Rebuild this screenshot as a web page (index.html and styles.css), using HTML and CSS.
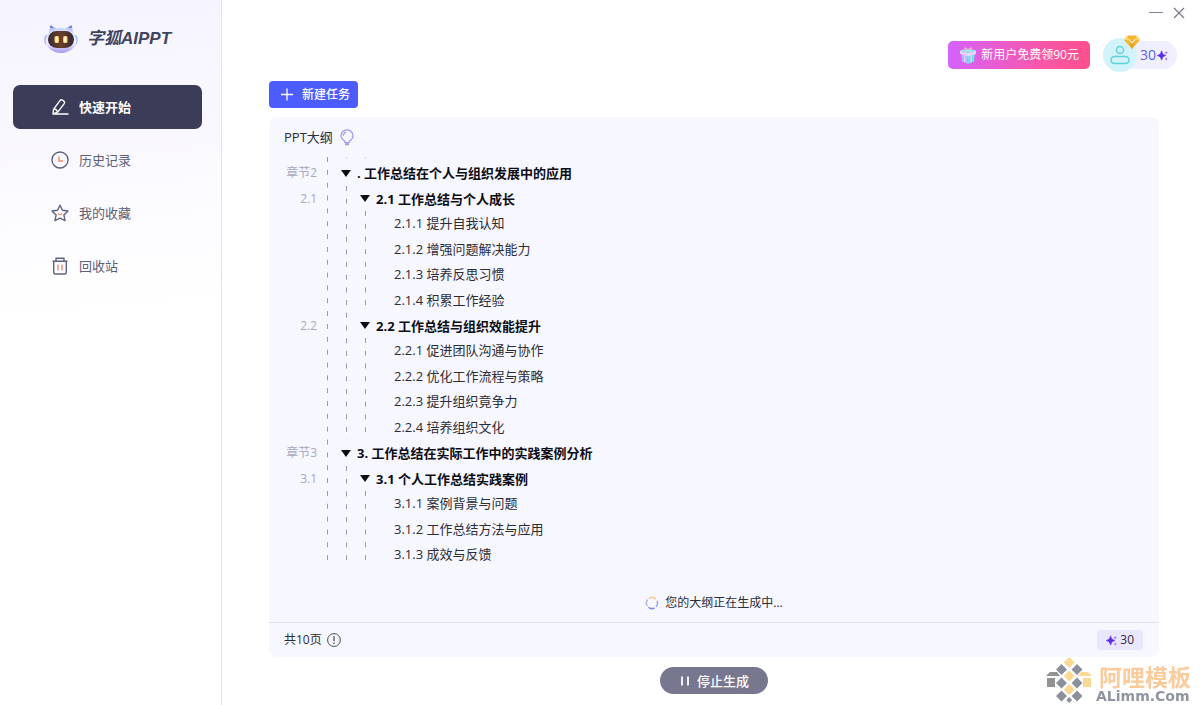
FILE: index.html
```html
<!DOCTYPE html>
<html lang="zh-CN">
<head>
<meta charset="utf-8">
<title>字狐AIPPT</title>
<link rel="stylesheet" href="styles.css">
</head>
<body>
<svg class="defs" width="0" height="0" aria-hidden="true">
  <symbol id="sparkle" viewBox="0 0 12 12">
    <path d="M5 1 Q5.4 5.4 9.6 6 Q5.4 6.6 5 11 Q4.6 6.600 .4 6 Q4.600 5.400 5 1Z" fill="#5a2be6" stroke="#5a2be6" stroke-width=".8"/>
    <path d="M10 1l.6 1.400 1.400.6-1.400.6-.6 1.400-.6-1.400-1.400-.6 1.400-.6zM10 8l.6 1.200 1.200.6-1.200.6-.6 1.200-.6-1.200-1.200-.6 1.200-.6z" fill="#9a6cf5"/>
  </symbol>
</svg>
<div class="app">
  <aside class="sidebar">
    <div class="brand">
      <svg class="brand-logo" viewBox="0 0 34 30" aria-hidden="true">
        <defs>
          <linearGradient id="shell" x1="0" y1="0" x2="0" y2="1"><stop offset="0" stop-color="#c9d4fa"/><stop offset=".6" stop-color="#f2f2ff"/><stop offset="1" stop-color="#a493ee"/></linearGradient>
          <linearGradient id="visor" x1="0" y1="0" x2="1" y2="0"><stop offset="0" stop-color="#3a2a3c"/><stop offset=".5" stop-color="#6b4024"/><stop offset="1" stop-color="#33263a"/></linearGradient>
        </defs>
        <path d="M5 10 6 2Q6.300.6 8 1.500L13 5H21L26 1.500Q27.700.6 28 2L29 10Z" fill="#b8c4f7"/>
        <path d="M6 3.500 6.500 1.500 10 4ZM28 3.500 27.500 1.500 24 4Z" fill="#5865bd"/>
        <ellipse cx="3" cy="16" rx="2.600" ry="5" fill="#9aa5f0"/><ellipse cx="31" cy="16" rx="2.600" ry="5" fill="#9ab9f5"/>
        <ellipse cx="17" cy="16.500" rx="15.500" ry="12.500" fill="url(#shell)"/>
        <rect x="4" y="7" width="26" height="17" rx="8.500" fill="url(#visor)"/>
        <rect x="10.500" y="12" width="4.500" height="7" rx="1.500" fill="#ffc05a"/><rect x="19" y="12" width="4.500" height="7" rx="1.500" fill="#ffc05a"/>
        <rect x="11.500" y="12.500" width="2.500" height="6" rx="1" fill="#fff5cf"/><rect x="20" y="12.500" width="2.500" height="6" rx="1" fill="#fff5cf"/>
      </svg>
      <span class="brand-name">字狐AIPPT</span>
    </div>
    <nav class="menu">
      <a class="menu-item active" href="#start">
        <svg class="menu-icon" viewBox="0 0 18 18" fill="none" stroke="#fff" stroke-width="1.400" stroke-linejoin="round" stroke-linecap="round"><path d="M2 16 2.600 11.200 9 2.600Q10.200 1.200 11.600 2.200L12.800 3.100Q14.200 4.200 13.200 5.600L6.800 14.100 2 16H17M3 11Q5.500 11 6.600 13.900"/></svg>
        快速开始</a>
      <a class="menu-item" href="#history">
        <svg class="menu-icon" viewBox="0 0 18 18" fill="none" stroke="#5d6280" stroke-width="1.400"><circle cx="9" cy="9" r="8"/><path d="M8 5.500V10H12" stroke="#f08a70"/></svg>
        历史记录</a>
      <a class="menu-item" href="#favorites">
        <svg class="menu-icon" viewBox="0 0 18 18" fill="none" stroke="#5d6280" stroke-width="1.400" stroke-linejoin="round"><path d="M9 1.200 11.400 6.300 17 7 12.900 10.900 14 16.600 9 14.200 4 16.600 5.100 10.900 1 7 6.600 6.300Z"/><path d="M6.800 9.500Q9 11.800 11.200 9.500" stroke="#f08a70"/></svg>
        我的收藏</a>
      <a class="menu-item" href="#trash">
        <svg class="menu-icon" viewBox="0 0 18 18" fill="none" stroke="#5d6280" stroke-width="1.400" stroke-linejoin="round"><path d="M1.500 4.200H16.500M5 4V1.200H13V4M2.700 4.200V15.500Q2.700 17 4.200 17H13.800Q15.300 17 15.300 15.500V4.200"/><path d="M7 7.500V13.500M11 7.500V13.500" stroke="#f08a70"/></svg>
        回收站</a>
    </nav>
  </aside>

  <main class="main">
    <div class="window-bar">
      <button class="window-button" type="button" aria-label="最小化"><svg viewBox="0 0 14 14" fill="none" stroke="#80838f" stroke-width="1"><path d="M0 6.500H14"/></svg></button>
      <button class="window-button" type="button" aria-label="关闭"><svg viewBox="0 0 14 14" fill="none" stroke="#777a86" stroke-width="1.200"><path d="M2 2 12 12M12 2 2 12"/></svg></button>
    </div>
    <header class="account-bar">
      <button class="promo" type="button">
        <svg class="promo-icon" viewBox="0 0 18 18" aria-hidden="true">
          <path d="M2 6 9 9V18L3 15.500Z" fill="#a9b6fb"/><path d="M16 6 9 9V18L15 15.500Z" fill="#74dcee"/>
          <path d="M1 4.500 9 7 17 4.500V8L9 10.500 1 8Z" fill="#dcd8ff"/><path d="M1 4.500 9 2.500 17 4.500 9 7Z" fill="#9ceae8"/>
          <path d="M9 4.500Q4 3.500 5.500 1.500 7.500 0 9 4.500 11 0 13 1.500 14 3.500 9 4.500Z" fill="#f7a3d5"/>
          <path d="M5 5.500 6.500 6V16.500L5.200 16ZM13 5.500 11.500 6V16.500L12.800 16Z" fill="#f9c4ee"/>
        </svg>
        新用户免费领90元</button>
      <button class="account" type="button">
        <span class="avatar">
          <svg class="avatar-icon" viewBox="0 0 20 20" fill="none" stroke="#5ed3da" stroke-width="1.500"><circle cx="10" cy="5" r="3.500"/><rect x="1" y="11.500" width="18" height="7" rx="3.500"/></svg>
          <svg class="gem" viewBox="0 0 16 14" aria-hidden="true"><path d="M3.500.5H12.500L16 5 8 14 0 5Z" fill="#f5b62e"/><path d="M0 5 3.500.5 5 5ZM16 5 12.500.5 11 5Z" fill="#ffd56b"/><path d="M5 5H11L8 14Z" fill="#e5981d"/><path d="M5 4.500 8 8 11 4.500" fill="none" stroke="#fff0c0" stroke-width="1.300"/></svg>
        </span>
        <span>30</span>
        <svg class="sparkle" aria-hidden="true"><use href="#sparkle"/></svg>
      </button>
    </header>

    <div class="workspace">
      <button class="new-task" type="button">
        <svg viewBox="0 0 14 14" stroke="#fff" stroke-width="1.300"><path d="M1 6.500H13M7 .5V12.500"/></svg>
        新建任务</button>

      <section class="card">
        <h1 class="card-title">PPT大纲
          <svg viewBox="0 0 14 17" fill="none" stroke="#9c9af2" stroke-width="1.200" stroke-linejoin="round"><path d="M4.700 13.500V12Q1 9.800 1 6.700A6 5.900 0 0 1 13 6.700Q13 9.800 9.300 12V13.500Z"/><path d="M5 15.200H9" stroke-width="2"/><path d="M3.200 6.800Q3.400 4 6 3.300"/></svg>
        </h1>
        <div class="outline">
          <div class="tail"></div>
          <section class="chapter">
            <h2 class="row chapter-row"><span class="label">章节2</span><span class="arrow"></span>. 工作总结在个人与组织发展中的应用</h2>
            <div class="sections">
              <h3 class="row section-row"><span class="label">2.1</span><span class="arrow"></span>2.1 工作总结与个人成长</h3>
              <ul class="topics"><li>2.1.1 提升自我认知</li><li>2.1.2 增强问题解决能力</li><li>2.1.3 培养反思习惯</li><li>2.1.4 积累工作经验</li></ul>
              <h3 class="row section-row"><span class="label">2.2</span><span class="arrow"></span>2.2 工作总结与组织效能提升</h3>
              <ul class="topics"><li>2.2.1 促进团队沟通与协作</li><li>2.2.2 优化工作流程与策略</li><li>2.2.3 提升组织竟争力</li><li>2.2.4 培养组织文化</li></ul>
            </div>
          </section>
          <section class="chapter">
            <h2 class="row chapter-row"><span class="label">章节3</span><span class="arrow"></span>3. 工作总结在实际工作中的实践案例分析</h2>
            <div class="sections">
              <h3 class="row section-row"><span class="label">3.1</span><span class="arrow"></span>3.1 个人工作总结实践案例</h3>
              <ul class="topics"><li>3.1.1 案例背景与问题</li><li>3.1.2 工作总结方法与应用</li><li>3.1.3 成效与反馈</li></ul>
            </div>
          </section>
        </div>
        <p class="progress" role="status">
          <svg viewBox="0 0 14 14" fill="none" stroke-width="1.500"><path d="M2.500 3.500A5.500 5.500 0 0 0 2.300 9.800" stroke="#b3b0f5"/><path d="M3.500 11.200A5.500 5.500 0 0 0 9.500 12" stroke="#7a86f7"/><path d="M11 10.800A5.500 5.500 0 0 0 12 4.800" stroke="#a5a2f5"/><path d="M11 3.300A5.500 5.500 0 0 0 4 2.300" stroke="#f8c795"/></svg>
          您的大纲正在生成中...</p>
        <footer class="card-footer">
          <span class="pages">共10页
            <svg viewBox="0 0 14 14" fill="none" stroke="#4d4d5c"><circle cx="7" cy="7" r="6.400"/><path d="M7 3.300V8.200M7 9.500V10.900" stroke-width="1.300"/></svg>
          </span>
          <span class="cost"><svg class="sparkle" aria-hidden="true"><use href="#sparkle"/></svg>30</span>
        </footer>
      </section>

      <button class="stop" type="button"><svg viewBox="0 0 10 10" stroke="#fff" stroke-width="1.800"><path d="M2 .5V9.500M8 .5V9.500"/></svg>停止生成</button>
    </div>
  </main>
</div>

<div class="watermark">
  <svg viewBox="0 0 46 46" aria-hidden="true">
    <g fill="#8b909b"><path d="M15.500 7l5.500 5.500-5.500 5.500-5.500-5.500zM31 7l5.500 5.500L31 18l-5.500-5.500zM15.500 20.500l5.500 5.500-5.500 5.500L10 26zM31 20.500l5.500 5.500-5.500 5.500-5.500-5.500zM15.500 33.500l5.500 5.500-5.500 5.500L10 39zM31 33.500l5.500 5.500-5.500 5.500-5.500-5.500zM23.200 40l3 3-3 3-3-3z"/><path d="M4 15H11L14 19H0ZM1 21H9V30H1Z" fill="#939393"/></g>
    <g fill="#fbd993"><path d="M23.200 0l5.500 5.500-5.500 5.500-5.500-5.500zM23.200 13.500l5.500 5.500-5.500 5.500-5.500-5.500zM23.200 27l5.500 5.500-5.500 5.500-5.500-5.500zM35 15H42L46 19H32ZM37 21H45V30H37Z"/></g>
  </svg>
  <div class="watermark-text"><span class="watermark-name">阿哩模板</span><span class="watermark-site">ALimm.Com</span></div>
</div>
</body>
</html>
```
FILE: styles.css
```css
* { box-sizing: border-box; }
body {
  margin: 0;
  background: #fff;
  color: #2c2c36;
  font: 13px/20px "Open Sans", "Noto Sans CJK SC", sans-serif;
}
h1, h2, h3, p, ul { margin: 0; padding: 0; }
button { border: 0; padding: 0; background: none; font: inherit; color: inherit; cursor: pointer; }
svg { flex: none; }
.defs { position: absolute; }
.app { display: flex; min-height: 100vh; }

.sidebar {
  width: 222px;
  flex: none;
  border-right: 1px solid #e4e3ec;
  background: linear-gradient(175deg, #f5f4ff 0, #f9f7fe 120px, #fff 320px);
}
.brand { display: flex; align-items: center; gap: 9px; height: 85px; padding: 0 0 7px 44px; }
.brand-logo { width: 34px; height: 30px; }
.brand-name { font: italic bold 17px/26px "Liberation Sans", "Noto Sans CJK SC", sans-serif; color: #41445f; }
.menu { display: flex; flex-direction: column; gap: 9px; padding: 0 19px 0 13px; }
.menu-item {
  display: flex;
  align-items: center;
  gap: 10px;
  height: 44px;
  padding: 0 0 1px 38px;
  border-radius: 7px;
  color: #5d6078;
  text-decoration: none;
}
.menu-item.active { background: #3a3c58; color: #fff; font-weight: bold; }
.menu-icon { width: 18px; height: 18px; }

.main { flex: 1; display: flex; flex-direction: column; min-width: 0; }
.window-bar { display: flex; justify-content: flex-end; gap: 9px; height: 26px; padding-right: 14px; }
.window-button { display: flex; align-items: center; }
.window-button svg { width: 14px; height: 14px; }
.account-bar { display: flex; justify-content: flex-end; align-items: center; gap: 13px; height: 55px; padding: 3px 23px 0 0; }
.promo {
  display: flex;
  align-items: center;
  gap: 4px;
  height: 28px;
  padding: 0 11px;
  border-radius: 5px;
  background: linear-gradient(90deg, #d562fb, #f857a9 65%, #ff508d);
  color: #fff;
  font-size: 12px;
}
.promo-icon { width: 18px; height: 18px; }
.account { display: flex; align-items: center; gap: 1px; height: 28px; padding-right: 9px; border-radius: 14px; background: #efefff; color: #5b63e8; font-size: 14px; }
.avatar { position: relative; display: flex; align-items: center; justify-content: center; width: 34px; height: 34px; margin-right: 2px; border-radius: 50%; background: #d2f3f9; }
.avatar-icon { width: 20px; height: 20px; }
.gem { position: absolute; top: -3px; right: -3px; width: 16px; height: 14px; }
.sparkle { width: 11px; height: 11px; }

.workspace { flex: 1; display: flex; flex-direction: column; align-items: flex-start; padding: 0 41px 11px 47px; }
.new-task { display: flex; align-items: center; gap: 8px; height: 27px; padding: 0 8px 0 11px; border-radius: 4px; background: #4d5cff; color: #fff; font-size: 12px; font-weight: 500; }
.new-task svg { width: 14px; height: 14px; }
.card { flex: 1; align-self: stretch; display: flex; flex-direction: column; margin: 9px 0 10px; border-radius: 8px; background: #f7f7ff; }
.card-title { display: flex; align-items: center; gap: 7px; height: 40px; padding-left: 15px; font-size: 13px; font-weight: 400; }
.card-title svg { width: 14px; height: 17px; }

.outline, .sections, .topics {
  background-image: linear-gradient(#9a9aae 5px, transparent 5px);
  background-size: 1px 13px;
  background-repeat: no-repeat round;
}
.outline { margin-left: 14px; background-position: 44px 0; color: #0c0c14; }
.tail { height: 3px; background: linear-gradient(#c0c0d4, #c0c0d4) 63px 0 / 1px 1px no-repeat, linear-gradient(#c0c0d4, #c0c0d4) 82px 0 / 1px 1px no-repeat; }
.sections { background-position: 63px 0; }
.topics { background-position: 82px 0; list-style: none; color: #2c2c36; }
.topics li { height: 26px; padding-left: 111px; line-height: 25px; }
.topics li:nth-child(even) { height: 25px; }
.row { display: flex; align-items: center; font-size: 13px; font-weight: bold; white-space: pre; }
.chapter-row { height: 26px; }
.section-row { height: 25px; }
.label { width: 34px; text-align: right; font-size: 12px; font-weight: 400; color: #a9a9bb; }
.arrow { border: 5px solid transparent; border-top: 7px solid #0c0c14; border-bottom: 0; }
.chapter-row .arrow { margin: 0 6px 0 24px; }
.section-row .arrow { margin: 0 6px 0 43px; }

.progress { display: flex; align-items: center; justify-content: center; gap: 6px; margin: auto 0; font-size: 12px; padding-top: 16px; }
.progress svg { width: 14px; height: 14px; }
.card-footer { display: flex; align-items: center; justify-content: space-between; height: 35px; padding: 0 16px 0 15px; border-top: 1px solid #e3e2f1; font-size: 12px; }
.pages { display: flex; align-items: center; gap: 5px; }
.pages svg { width: 14px; height: 14px; }
.cost { display: flex; align-items: center; gap: 3px; height: 20px; padding: 0 9px; border-radius: 4px; background: #e9e7fd; }
.stop { display: flex; align-items: center; align-self: center; gap: 7px; height: 27px; padding: 0 19px 0 20px; border-radius: 14px; background: #77788f; color: #fff; font-weight: 500; }
.stop svg { width: 10px; height: 10px; }

.watermark { position: fixed; right: 9px; bottom: 2px; display: flex; align-items: flex-end; gap: 4px; pointer-events: none; }
.watermark svg { width: 46px; height: 46px; }
.watermark-text { display: flex; flex-direction: column; }
.watermark-name { color: #fbcb9c; padding-left: 3px; font: bold 23px/26px "Noto Sans CJK SC", sans-serif; }
.watermark-site { color: #8f949e; font: bold 14px/14px "DejaVu Sans", sans-serif; }
```
